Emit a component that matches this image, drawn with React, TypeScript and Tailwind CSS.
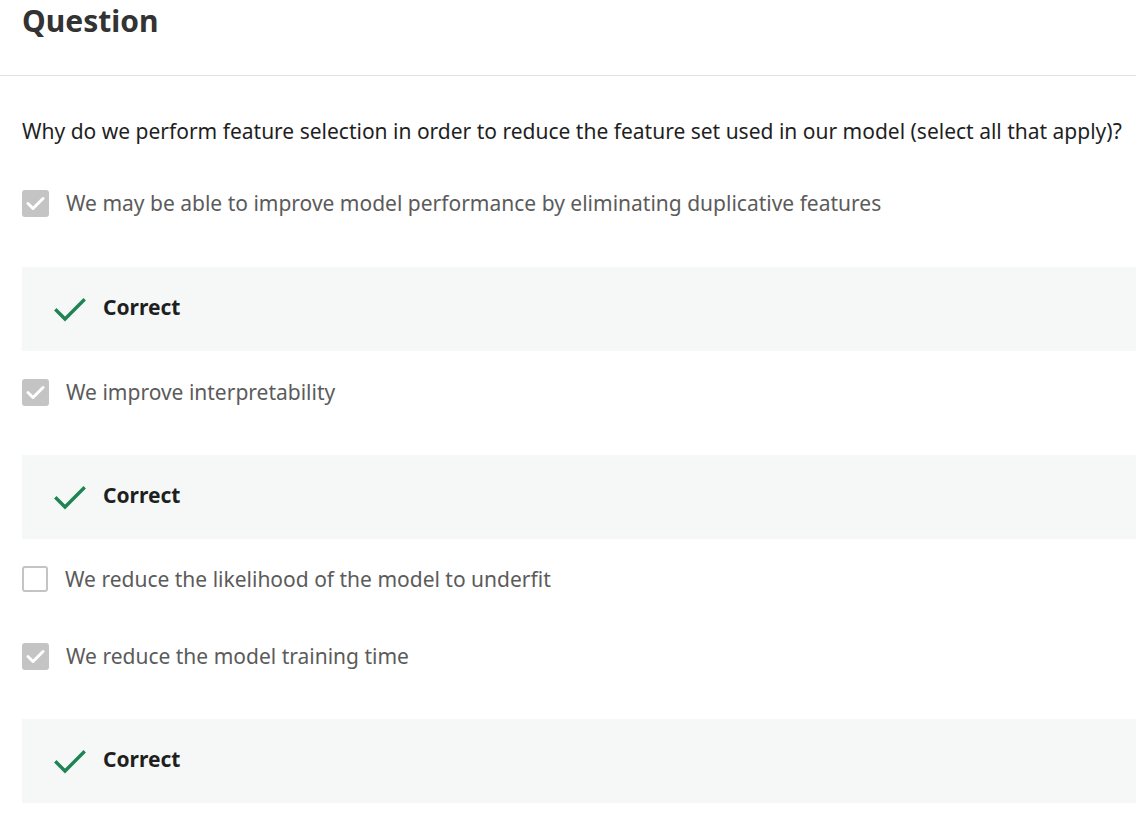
import React from "react";

const font = { fontFamily: "'Noto Sans', sans-serif", fontVariantLigatures: "none" as const };

function CheckedBox() {
  return (
    <div className="w-[27px] h-[27px] rounded-[3px] bg-[#c4c4c4] flex items-center justify-center shrink-0">
      <svg width="19" height="15" viewBox="0 0 19 15" fill="none">
        <path d="M2 7.5 L7 12.5 L17 2.5" stroke="#fff" strokeWidth="3" strokeLinecap="round" strokeLinejoin="round" />
      </svg>
    </div>
  );
}

function EmptyBox() {
  return <div className="w-[26px] h-[26px] rounded-[3px] border-2 border-[#c4c4c4] bg-white shrink-0" />;
}

function Option({ checked, text }: { checked: boolean; text: string }) {
  return (
    <div className="flex items-center h-[28px]">
      {checked ? <CheckedBox /> : <EmptyBox />}
      <span className="ml-[17px] text-[21px] text-[#5b5b5b] leading-[28px] whitespace-nowrap">{text}</span>
    </div>
  );
}

function Correct() {
  return (
    <div className="h-[84px] bg-[#f5f8f7] flex items-center pl-[32px] -mr-[40px]">
      <svg width="32" height="24" viewBox="0 0 32 24" fill="none" className="mt-[2px]">
        <path d="M2.5 12.5 L11 21 L29.5 2.5" stroke="#1f8354" strokeWidth="3.4" strokeLinecap="square" />
      </svg>
      <span className="ml-[17px] text-[21px] font-bold text-[#1f1f1f] leading-[28px] pb-[4px]">Correct</span>
    </div>
  );
}

export default function App() {
  return (
    <div className="w-[1136px] h-[836px] bg-white overflow-hidden" style={font}>
      <div className="h-[76px] border-b border-[#e1e1e1] px-[22px] pt-[3px]">
        <h1 className="text-[30px] font-bold text-[#333333] leading-[36px]">Question</h1>
      </div>
      <div className="px-[22px]">
        <p className="mt-[41px] text-[21px] text-[#1f1f1f] leading-[28px] whitespace-nowrap">
          Why do we perform feature selection in order to reduce the feature set used in our model (select all that apply)?
        </p>
        <div className="mt-[44px]">
          <Option checked text="We may be able to improve model performance by eliminating duplicative features" />
        </div>
        <div className="mt-[50px]"><Correct /></div>
        <div className="mt-[27px]">
          <Option checked text="We improve interpretability" />
        </div>
        <div className="mt-[49px]"><Correct /></div>
        <div className="mt-[26px]">
          <Option checked={false} text="We reduce the likelihood of the model to underfit" />
        </div>
        <div className="mt-[49px]">
          <Option checked text="We reduce the model training time" />
        </div>
        <div className="mt-[49px]"><Correct /></div>
      </div>
    </div>
  );
}
